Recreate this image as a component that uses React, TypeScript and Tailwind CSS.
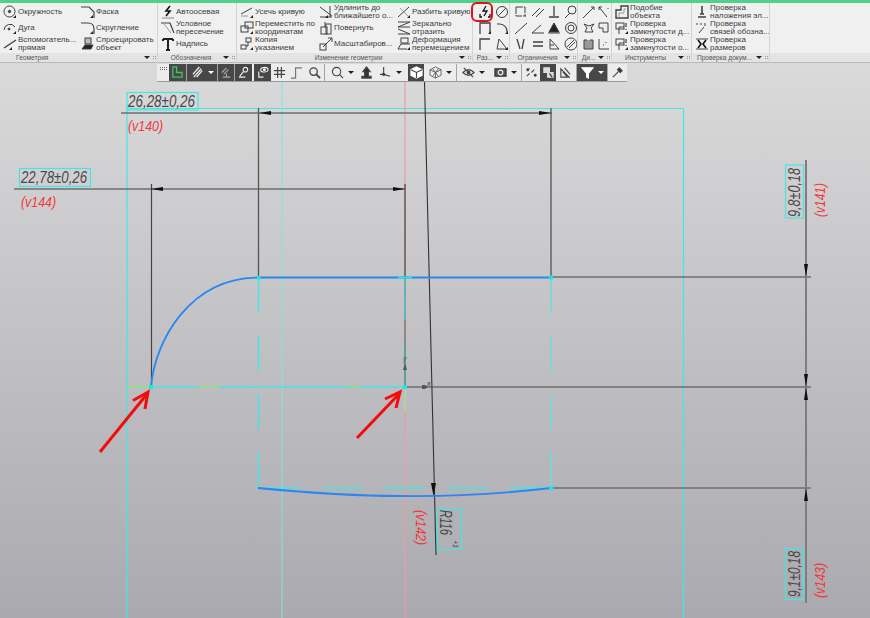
import React from "react";

const uiFont = "[font-family:'Liberation_Sans',Arial,sans-serif]";

// --- small ribbon glyphs ------------------------------------------------
const G = ({ children }: { children: React.ReactNode }) => (
  <svg
    width={14}
    height={14}
    viewBox="0 0 14 14"
    fill="none"
    stroke="#404040"
    strokeWidth="1"
    className="shrink-0"
  >
    {children}
  </svg>
);

const Tri = ({ x = 10, y = 13 }: { x?: number; y?: number }) => (
  <path d={`M${x} ${y}h3v-3z`} fill="#222" stroke="none" />
);

const glyphs: Record<string, React.ReactNode> = {
  circle: (
    <>
      <circle cx="6.5" cy="6.5" r="5.5" />
      <circle cx="6.5" cy="6.5" r="1.2" fill="#404040" />
      <Tri />
    </>
  ),
  arc: (
    <>
      <path d="M1 9a6 6 0 0 1 11-3" />
      <circle cx="6" cy="8" r="1" fill="#404040" />
      <Tri />
    </>
  ),
  aux: (
    <>
      <path d="M1 11L13 3" strokeWidth="1.4" />
      <Tri x={6} />
    </>
  ),
  chamfer: (
    <>
      <path d="M0 2h8l5 5v6" strokeWidth="1.2" />
      <Tri x={9} />
    </>
  ),
  fillet: (
    <>
      <path d="M0 2h7q6 0 6 6v5" strokeWidth="1.2" />
      <Tri x={9} />
    </>
  ),
  project: (
    <>
      <rect x="4" y="1" width="6" height="6" fill="#bbb" />
      <path d="M1 12l3-4h8l-2 4z" fill="#222" />
    </>
  ),
  axis: (
    <>
      <path d="M9 1L5 6h4L5 11" stroke="#111" strokeWidth="1.6" />
      <path d="M1 13h12" stroke="#888" />
    </>
  ),
  cross: (
    <>
      <path d="M0 2h9l4 10" strokeWidth="1.2" />
      <path d="M3 3l7 9" stroke="#999" />
    </>
  ),
  T: <path d="M2 2h10M7 2v11M5 13h4M2 2v2M12 2v2" stroke="#222" strokeWidth="2" />,
  trim: (
    <>
      <path d="M1 9L12 3" />
      <path d="M1 11h7" stroke="#999" />
      <Tri />
    </>
  ),
  extend: (
    <>
      <path d="M1 2l12 9M1 12h12M11 1v11" />
      <Tri x={6} />
    </>
  ),
  split: (
    <>
      <path d="M1 12L12 2" />
      <path d="M3 3l8 8" stroke="#999" />
      <Tri />
    </>
  ),
  move: (
    <>
      <rect x="5" y="1" width="8" height="6" />
      <rect x="1" y="5" width="7" height="6" />
      <Tri />
    </>
  ),
  rotate: (
    <>
      <rect x="2" y="6" width="6" height="7" />
      <rect x="7" y="3" width="5" height="10" />
      <path d="M6 6V1" />
    </>
  ),
  mirror: <path d="M1 1h12L1 6h12M1 13h12L1 8" />,
  copy: (
    <>
      <rect x="6" y="1" width="5" height="4" />
      <rect x="1" y="8" width="5" height="4" />
      <path d="M8 5v4H6" />
      <Tri />
    </>
  ),
  scale: (
    <>
      <rect x="1" y="7" width="6" height="6" />
      <path d="M4 10L13 1M9 1h4v4" />
    </>
  ),
  deform: (
    <>
      <rect x="4" y="1" width="7" height="5" />
      <path d="M1 12l3-5h9M1 12h9" />
      <Tri />
    </>
  ),
  similar: (
    <>
      <path d="M1 13V5h5V1h7v12z" strokeWidth="1.4" />
      <path d="M4 13V8h5V4h2" stroke="#999" />
    </>
  ),
  closed: (
    <>
      <rect x="1" y="2" width="8" height="6" />
      <path d="M4 13V6h5" />
      <path d="M11 2v4M11 8v1" strokeWidth="1.2" />
      <Tri />
    </>
  ),
  overlay: <path d="M7 1v8M3 12h8M5 9h4" strokeWidth="1.6" />,
  links: <path d="M1 3h2M5 3h2M10 2v3M4 12l5-6" />,
  sizes: (
    <>
      <path d="M1 2h12M1 12h12" />
      <path d="M3 3l3 4-3 4M11 3L8 7l3 4" stroke="#111" strokeWidth="1.6" />
    </>
  ),
};

const Item = ({ g, lines }: { g: string; lines: string[] }) => (
  <div className="flex h-[16.4px] items-center whitespace-nowrap">
    <div className="flex w-[15px] shrink-0 justify-start">
      <G>{glyphs[g]}</G>
    </div>
    <div className="text-[8px] leading-[8px] text-[#3c3c3c]">
      {lines.map((l) => (
        <div key={l}>{l}</div>
      ))}
    </div>
  </div>
);

const Panel = ({
  title,
  w,
  left,
  children,
}: {
  title: string;
  w: number;
  left?: boolean;
  children: React.ReactNode;
}) => (
  <div
    className="flex shrink-0 flex-col border-r border-[#d4d4d4]"
    style={{ width: w }}
  >
    <div className="h-[50px] overflow-hidden pl-[3px] pt-[0.5px]">{children}</div>
    <div className="flex h-[10px] items-center border-b border-[#b8b8b8] bg-[#e4e4e4] pl-[2px] pr-[1px] text-[6.6px] leading-[9px] text-[#555]">
      <span
        className={
          left
            ? "flex-1 truncate pl-[14px] text-left"
            : "flex-1 truncate text-center"
        }
      >
        {title}
      </span>
      <span className="ml-[1px] h-0 w-0 border-x-[3px] border-t-[3px] border-x-transparent border-t-[#222]" />
      <span className="ml-[3px] grid w-[3px] grid-cols-2 gap-[1px]">
        <i className="h-px w-px bg-[#999]" />
        <i className="h-px w-px bg-[#999]" />
        <i className="h-px w-px bg-[#999]" />
        <i className="h-px w-px bg-[#999]" />
      </span>
    </div>
  </div>
);

const Col3 = ({ w, items }: { w: number; items: [string, string[]][] }) => (
  <div className="flex shrink-0 flex-col" style={{ width: w }}>
    {items.map(([g, lines]) => (
      <Item key={g + lines[1] + lines[0]} g={g} lines={lines} />
    ))}
  </div>
);

// icon-only grid panels
const gridIcons: Record<string, React.ReactNode[]> = {
  raz: [
    <path d="M8 1L5 6h4L6 11M2 9v3h2M12 9v3h-2" stroke="#111" strokeWidth="1.3" />,
    <>
      <circle cx="7" cy="7" r="5.5" />
      <path d="M3 11l8-8" />
    </>,
    <>
      <path d="M2 13V2h10v11" strokeWidth="1.3" />
      <Tri />
    </>,
    <>
      <path d="M2 3h3q7 1 7 8" strokeWidth="1.2" />
      <Tri />
    </>,
    <path d="M2 13V2h10" strokeWidth="1.3" />,
    <>
      <path d="M4 2l8 10H2z" />
      <Tri />
    </>,
  ],
  ogr: [
    <path d="M2 2v9h10M2 2h9v9" strokeDasharray="7 1" />,
    <path d="M1 11L9 3M5 12l8-8" />,
    <path d="M7 1v10M2 12h10" strokeWidth="1.3" />,
    <>
      <circle cx="8" cy="5" r="4" />
      <path d="M1 13L6 8" />
    </>,
    <path d="M1 13L13 2" />,
    <path d="M1 12h12M1 12l9-8" />,
    <>
      <path d="M7 2l5 9H2z" fill="#222" />
      <path d="M1 12h12" />
    </>,
    <>
      <circle cx="7" cy="7" r="5.5" />
      <circle cx="7" cy="7" r="3" />
    </>,
    <path d="M3 2l3 10M10 2L8 12" strokeWidth="1.3" />,
    <path d="M2 5h10M2 9h10" strokeWidth="1.6" />,
    <path d="M3 2v10h9zM3 8h4" />,
    <>
      <circle cx="7" cy="7" r="6" />
      <path d="M3 10l7-7M5 11l6-6" />
    </>,
  ],
  di: [
    <path d="M1 13L12 2M9 2h3v3" />,
    <path d="M2 2l8 10M2 2h3M2 2v3M11 3v1" />,
    <path d="M2 3l3 4-2 4h8l-2-4 3-4-5 2z" />,
    <path d="M2 2h9v9H6v-4H2z" />,
    <path d="M2 3v9h9V3H8M5 3H2" fill="#999" />,
    <path d="M2 12V2m0 10h10M6 8h1M9 5v1" />,
  ],
};

const IconGrid = ({ k, cols, w }: { k: string; cols: number; w: number }) => (
  <div
    className={cols === 2 ? "grid grid-cols-2" : "grid grid-cols-4"}
    style={{ width: w }}
  >
    {gridIcons[k].map((n, i) => (
      <div key={i} className="flex h-[16.4px] items-center justify-center">
        <G>{n}</G>
      </div>
    ))}
  </div>
);

const Ribbon = () => (
  <div className={`flex h-[60px] bg-[#f0f0f0] ${uiFont}`}>
    <Panel title="Геометрия" w={158} left>
      <div className="flex">
        <Col3
          w={78}
          items={[
            ["circle", ["Окружность"]],
            ["arc", ["Дуга"]],
            ["aux", ["Вспомогатель...", "прямая"]],
          ]}
        />
        <Col3
          w={74}
          items={[
            ["chamfer", ["Фаска"]],
            ["fillet", ["Скругление"]],
            ["project", ["Спроецировать", "объект"]],
          ]}
        />
      </div>
    </Panel>
    <Panel title="Обозначения" w={79}>
      <Col3
        w={72}
        items={[
          ["axis", ["Автоосевая"]],
          ["cross", ["Условное", "пересечение"]],
          ["T", ["Надпись"]],
        ]}
      />
    </Panel>
    <Panel title="Изменение геометрии" w={236}>
      <div className="flex">
        <Col3
          w={79}
          items={[
            ["trim", ["Усечь кривую"]],
            ["move", ["Переместить по", "координатам"]],
            ["copy", ["Копия", "указанием"]],
          ]}
        />
        <Col3
          w={78}
          items={[
            ["extend", ["Удлинить до", "ближайшего о..."]],
            ["rotate", ["Повернуть"]],
            ["scale", ["Масштабиров..."]],
          ]}
        />
        <Col3
          w={74}
          items={[
            ["split", ["Разбить кривую"]],
            ["mirror", ["Зеркально", "отразить"]],
            ["deform", ["Деформация", "перемещением"]],
          ]}
        />
      </div>
    </Panel>
    <Panel title="Раз..." w={37}>
      <IconGrid k="raz" cols={2} w={34} />
    </Panel>
    <Panel title="Ограничения" w={68}>
      <IconGrid k="ogr" cols={4} w={66} />
    </Panel>
    <Panel title="Ди..." w={34}>
      <IconGrid k="di" cols={2} w={31} />
    </Panel>
    <Panel title="Инструменты" w={80}>
      <Col3
        w={76}
        items={[
          ["similar", ["Подобие", "объекта"]],
          ["closed", ["Проверка", "замкнутости д..."]],
          ["closed", ["Проверка", "замкнутости о..."]],
        ]}
      />
    </Panel>
    <Panel title="Проверка докум..." w={78}>
      <Col3
        w={74}
        items={[
          ["overlay", ["Проверка", "наложения эл..."]],
          ["links", ["Проверка", "связей обозна..."]],
          ["sizes", ["Проверка", "размеров"]],
        ]}
      />
    </Panel>
    <div className="flex-1">
      <div className="h-[50px]" />
      <div className="h-[10px] border-b border-[#b8b8b8] bg-[#e4e4e4]" />
    </div>
  </div>
);

// --- view toolbar -------------------------------------------------------
const Btn = ({
  dark,
  caret,
  w = 17,
  children,
}: {
  dark?: boolean;
  caret?: boolean;
  w?: number;
  children: React.ReactNode;
}) => (
  <div
    className={
      dark
        ? "flex h-[17px] shrink-0 items-center justify-center gap-[4px] bg-[#474747]"
        : "flex h-[17px] shrink-0 items-center justify-center gap-[4px]"
    }
    style={{ width: w }}
  >
    <svg
      width="13"
      height="13"
      viewBox="0 0 14 14"
      fill="none"
      stroke={dark ? "#eee" : "#444"}
      strokeWidth="1.2"
    >
      {children}
    </svg>
    {caret && (
      <span
        className={
          dark
            ? "h-0 w-0 border-x-[3px] border-t-[3px] border-x-transparent border-t-white"
            : "h-0 w-0 border-x-[3px] border-t-[3px] border-x-transparent border-t-[#222]"
        }
      />
    )}
  </div>
);

const Sep = () => <div className="h-[17px] w-px shrink-0 bg-[#a5a5a5]" />;

const Toolbar = () => (
  <div className="ml-[157px] mt-px flex h-[18px] w-[470px] items-start border-b border-[#9a9a9a] bg-[#ececec]">
    <div className="flex h-[17px] w-[12px] shrink-0 items-start justify-center pt-[3px]">
      <div className="h-[3px] w-[7px] border-y border-dotted border-[#666]" />
    </div>
    <Btn dark>
      <path d="M2 1v11h10V7H6V1z" stroke="#3fc46a" strokeWidth="1.4" />
    </Btn>
    <Sep />
    <Btn dark caret w={30}>
      <path d="M3 12L11 3M6 12l6-7M2 9l7-8" strokeWidth="1.5" />
    </Btn>
    <Sep />
    <Btn dark w={16}>
      <path d="M2 7l5-5M4 9l5-5M7 8v4M3 12h8" stroke="#aaa" />
    </Btn>
    <Sep />
    <Btn dark>
      <circle cx="9" cy="4" r="2.5" />
      <path d="M7 6l-4 5M2 12h7" />
    </Btn>
    <div className="w-[2px] shrink-0" />
    <Btn dark>
      <path d="M3 6v6h5" />
      <ellipse cx="9" cy="4" rx="4" ry="2.5" />
      <circle cx="9" cy="4" r="1" fill="#eee" />
    </Btn>
    <Btn>
      <path d="M5 1v12M9 1v12M1 5h12M1 9h12" strokeWidth="1.3" />
    </Btn>
    <Btn>
      <path d="M1 13h5V2h7" stroke="#777" strokeWidth="1.3" />
    </Btn>
    <Btn w={18}>
      <circle cx="6" cy="6" r="4" strokeWidth="1.4" />
      <path d="M9 9l4 4" strokeWidth="2" />
    </Btn>
    <div className="w-[1px] shrink-0" />
    <Sep />
    <div className="w-[1px] shrink-0" />
    <Btn caret w={32}>
      <circle cx="6" cy="6" r="4.5" />
      <path d="M9 9l4 4" />
    </Btn>
    <Btn w={16}>
      <path d="M7 1l4 5H9v5h3v2H2v-2h3V6H3z" fill="#333" />
    </Btn>
    <Btn caret w={32}>
      <path d="M5 1v8H1M5 9l7 2" />
      <circle cx="5" cy="9" r="1.2" fill="#333" />
    </Btn>
    <div className="w-[2px] shrink-0" />
    <Btn dark w={16}>
      <path d="M7 1l6 3v6l-6 3-6-3V4z" fill="#fff" stroke="#fff" />
      <path d="M1 4l6 3 6-3M7 7v6" stroke="#474747" />
    </Btn>
    <Btn caret w={32}>
      <path d="M7 1l6 3v6l-6 3-6-3V4zM1 4l6 3 6-3M7 7v6M4 3l6 8M10 3l-6 8" strokeWidth=".8" />
    </Btn>
    <Sep />
    <Btn caret w={32}>
      <path d="M1 7q6-6 12 0q-6 6-12 0z" />
      <circle cx="7" cy="7" r="1.5" fill="#333" />
      <path d="M2 2l10 10" />
    </Btn>
    <Btn caret w={32}>
      <rect x="1" y="3" width="12" height="8" fill="#555" stroke="#333" />
      <circle cx="7" cy="7" r="2.5" stroke="#eee" />
    </Btn>
    <Sep />
    <Btn w={18}>
      <path d="M2 11l3-3M7 7l3-3M4 3h1M11 10h1" />
      <circle cx="3" cy="4" r="1" fill="#333" />
      <circle cx="11" cy="10" r="1" fill="#333" />
    </Btn>
    <Btn dark w={16}>
      <path d="M2 2h6v5h4v5H6V7H2z" fill="#ddd" stroke="#ddd" />
      <path d="M8 8l3 4" stroke="#333" />
    </Btn>
    <Btn w={18}>
      <path d="M2 12V3l9 9zM4 6l5 6M6 2l6 7" />
    </Btn>
    <div className="w-[2px] shrink-0" />
    <Sep />
    <Btn dark caret w={30}>
      <path d="M1 2h12L8 8v5l-2-1V8z" fill="#fff" stroke="#fff" />
    </Btn>
    <Sep />
    <Btn w={19}>
      <path d="M2 12l6-6M7 4l3 3M9 2l3 3-2 2-3-3z" fill="#333" />
    </Btn>
  </div>
);

// --- drawing ------------------------------------------------------------
const DIM = "#6f6f6f";
const CY = "#48e4e4";
const RED = "#f23838";
const BLUE = "#2a86f2";

const ArrowH = ({ tip, y, dir }: { tip: number; y: number; dir: 1 | -1 }) => (
  <path d={`M${tip} ${y}L${tip + dir * 12} ${y - 2}V${y + 2}z`} fill="#111" />
);
const ArrowV = ({ x, tip, dir }: { x: number; tip: number; dir: 1 | -1 }) => (
  <path d={`M${x} ${tip}L${x - 2} ${tip + dir * 13}H${x + 2}z`} fill="#111" />
);

const drawFont = "'Liberation Sans', Arial, sans-serif";

const Dim = ({
  x,
  y,
  size = 17,
  len,
  color = "#484848",
  rot,
  children,
}: {
  x: number;
  y: number;
  size?: number;
  len?: number;
  color?: string;
  rot?: number;
  children: React.ReactNode;
}) => (
  <text
    x={x}
    y={y}
    fontFamily={drawFont}
    fontStyle="italic"
    fontSize={size}
    fill={color}
    textLength={len}
    lengthAdjust={len ? "spacingAndGlyphs" : undefined}
    transform={rot ? `rotate(${rot} ${x} ${y})` : undefined}
  >
    {children}
  </text>
);

const Drawing = () => (
  <svg
    width="870"
    height="536"
    viewBox="0 82 870 536"
    fill="none"
    className="block"
  >
    {/* sheet frame */}
    <path d="M127 108.5H683.5V618M127 108.5V618" stroke={CY} strokeWidth="1.2" />
    <path d="M282 82V618" stroke="#84e2e6" />

    {/* construction lines */}
    <path d="M405 82V618" stroke="#e8a0a4" strokeWidth="1.2" />
    <path d="M258.5 277V313M258.5 336V371M258.5 394V430M258.5 452V488" stroke={CY} strokeWidth="1.5" />
    <path d="M551 277V313M551 336V371M551 394V430M551 452V488" stroke="#6cdcdc" strokeWidth="1.6" />
    <path d="M127 387H405" stroke={CY} strokeWidth="1.4" />
    <path d="M127 387H150M198 387H220M350 387H358" stroke="#a6dc70" strokeWidth="1.4" />
    <path d="M405 277V320" stroke="#3fb8b8" strokeWidth="1.6" />
    <path d="M405 320V343" stroke="#857a7a" strokeWidth="1.6" />
    <path d="M405 343V387" stroke="#3f9c9c" strokeWidth="1.6" />
    <path d="M405 387V411" stroke="#a8de98" strokeWidth="1.6" />
    <path d="M258 488H300M322 488H362M385 488H425M448 488H488M510 488H550" stroke={CY} strokeWidth="1.3" />

    {/* dimensions */}
    <path d="M121 113H552M14 189H405" stroke={DIM} strokeWidth="1.4" />
    <path d="M258.5 108V277M551 108V277" stroke="#555" strokeWidth="1.3" />
    <path d="M151.5 184V387M405 184V277" stroke="#444" strokeWidth="1.2" />
    <path d="M405 387H811M551 277H811M551 488H811" stroke={DIM} strokeWidth="1.4" />
    <path d="M806 160V603" stroke="#7d7d7d" strokeWidth="2" />
    <path d="M424.5 82L436 555" stroke="#333" strokeWidth="1.1" />
    <ArrowH tip={259} y={113} dir={1} />
    <ArrowH tip={551} y={113} dir={-1} />
    <ArrowH tip={151} y={189} dir={1} />
    <ArrowH tip={405} y={189} dir={-1} />
    <ArrowV x={806} tip={277} dir={-1} />
    <ArrowV x={806} tip={387} dir={-1} />
    <ArrowV x={806} tip={387} dir={1} />
    <ArrowV x={806} tip={488} dir={1} />
    <path d="M433.5 496L431 483H436z" fill="#111" />

    {/* profile */}
    <path d="M151 387C155 340 190 278 258 277.5H551" stroke={BLUE} strokeWidth="1.8" />
    <path d="M258 488C300 492 350 496 400 496C440 496.5 500 494 551 488" stroke={BLUE} strokeWidth="1.8" />
    <path d="M398 277.5H412" stroke="#30e0e0" strokeWidth="2" />
    <g fill="#20e4e4">
      <rect x="149" y="385" width="4" height="4" />
      <rect x="403" y="385" width="4" height="4" />
      <rect x="257" y="276" width="3.5" height="3.5" />
      <rect x="549" y="275.5" width="4" height="4" />
      <rect x="549" y="486" width="4" height="4" />
    </g>

    {/* local axes */}
    <path d="M405 363L403 370H407z" fill="#555" />
    <path d="M422 385h3l3 2-3 2h-3z" fill="#555" />
    <Dim x={403} y={361} size={7} color="#555">y</Dim>
    <Dim x={427} y={386} size={7} color="#333">x</Dim>

    {/* dimension boxes */}
    <g stroke={CY} strokeWidth="1.2">
      <rect x="127" y="92.5" width="71" height="17.5" />
      <rect x="19.5" y="168.5" width="71" height="18" />
      <rect x="785.5" y="165" width="18" height="53" />
      <rect x="785.5" y="548.5" width="18" height="51" />
      <rect x="437.5" y="508.5" width="24" height="41" />
    </g>

    <Dim x={128} y={107} size={17} len={67}>26,28±0,26</Dim>
    <Dim x={21} y={183} size={17} len={66}>22,78±0,26</Dim>
    <Dim x={128} y={131} size={15} len={35} color={RED}>(v140)</Dim>
    <Dim x={21} y={207} size={15} len={35} color={RED}>(v144)</Dim>
    <Dim x={800} y={217} size={17} len={49} rot={-90}>9,8±0,18</Dim>
    <Dim x={800} y={597} size={17} len={46} rot={-90}>9,1±0,18</Dim>
    <Dim x={825} y={217} size={15} len={34} color={RED} rot={-90}>(v141)</Dim>
    <Dim x={825} y={598} size={15} len={35} color={RED} rot={-90}>(v143)</Dim>
    <Dim x={416} y={510} size={15} len={35} color={RED} rot={90}>(v142)</Dim>
    <Dim x={440} y={510} size={17} len={25} rot={90}>R116</Dim>
    <Dim x={453} y={540} size={7} len={8} rot={90}>+1</Dim>

    {/* callout arrows */}
    <g stroke="#f40c0c" strokeWidth="3" fill="none">
      <path d="M100 452L147 394" />
      <path d="M133 400.5L148 392L145 409" />
      <path d="M357 438L399 394" />
      <path d="M385 399L400 392L396 408" />
    </g>
  </svg>
);

export default function App() {
  return (
    <div className="relative h-[618px] w-[870px] overflow-hidden bg-gradient-to-b from-[#e0e0e0] to-[#a9a9af]">
      <div className="h-[3px] bg-[#4fd18a]" />
      <Ribbon />
      <Toolbar />
      <Drawing />
      {/* highlight round the ribbon button */}
      <div className="absolute left-[471px] top-[2px] h-[20px] w-[22px] rounded-[6px] border-[2.5px] border-[#e0141c]" />
    </div>
  );
}
